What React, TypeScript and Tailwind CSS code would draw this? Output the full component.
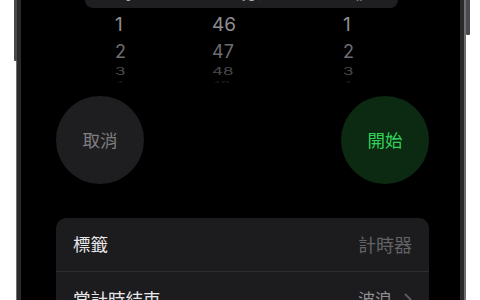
import React from "react";

const cjk = { fontFamily: '"Noto Sans CJK TC", "Noto Sans", sans-serif' };
const num = { fontFamily: 'Inter, "Noto Sans CJK TC", sans-serif' };

function Row({
  a,
  b,
  c,
  cls,
}: {
  a: string;
  b: string;
  c: string;
  cls: string;
}) {
  return (
    <div className={`flex w-[316px] ml-[29px] ${cls}`} style={num}>
      <div className="w-[70px] pl-[30px]">{a}</div>
      <div className="w-[140px] pl-[57px]">{b}</div>
      <div className="w-[106px] pl-[48px]">{c}</div>
    </div>
  );
}

export default function App() {
  return (
    <div className="relative w-[480px] h-[300px] bg-white overflow-hidden flex">
      <div className="absolute top-0 left-[14px] w-[3px] h-[61px] bg-[#4a4a4e] rounded-b-[1px]" />
      <div className="absolute top-0 left-[466px] w-[4px] h-[35px] bg-[#4a4a4e] rounded-b-[1px]" />
      <div className="ml-[16px] w-[450px] h-full flex bg-[#2a2a2c] border-l border-r-2 border-[#6e6e73] px-[4px]">
        <div className="flex-1 bg-black flex flex-col pl-[35px] pr-[31px]">
          {/* picker */}
          <div className="flex flex-col">
            <div className="ml-[29px] w-[313px] h-[30px] mt-[-22px] rounded-[8px] bg-[#1f1f21] flex items-end pb-[6px] text-[17px] leading-[20px] text-[#a8a8ac]" style={cjk}>
              <div className="w-[70px] pl-[31px]">0 小時</div>
              <div className="w-[140px] pl-[64px]">45 分鐘</div>
              <div className="w-[106px] pl-[47px]">0 秒</div>
            </div>
            <Row a="1" b="46" c="1" cls="h-[34px] items-center text-[19px] leading-[20px] text-[#8e8e92]" />
            <Row a="2" b="47" c="2" cls="h-[20px] items-center text-[18px] leading-[20px] text-[#6e6e72]" />
            <Row a="3" b="48" c="3" cls="h-[18px] items-center text-[17px] leading-[16px] text-[#4a4a4d] scale-y-[0.6]" />
            <Row a="4" b="49" c="4" cls="h-[4px] items-start text-[14px] leading-[10px] text-[#2a2a2c] scale-y-[0.35] overflow-hidden" />
          </div>
          {/* buttons */}
          <div className="mt-[12px] flex justify-between">
            <div className="w-[88px] h-[88px] rounded-full bg-[#1e1e20] flex items-center justify-center text-[17.5px] text-[#7e7e82]" style={cjk}>
              取消
            </div>
            <div className="w-[88px] h-[88px] rounded-full bg-[#0c2912] flex items-center justify-center text-[17.5px] text-[#32d25a]" style={cjk}>
              開始
            </div>
          </div>
          {/* list */}
          <div className="mt-[34px] rounded-[10px] bg-[#1c1c1e] flex flex-col" style={cjk}>
            <div className="h-[54px] flex items-center justify-between px-[17px] border-b border-[#2e2e30]">
              <span className="text-[17.5px] text-[#e8e8ea]">標籤</span>
              <span className="text-[18px] text-[#636366]">計時器</span>
            </div>
            <div className="h-[54px] flex items-center justify-between px-[17px]">
              <span className="text-[17.5px] text-[#e8e8ea]">當計時結束</span>
              <span className="flex items-center gap-[12px] text-[17px] text-[#8e8e92]">
                波浪
                <svg width="8" height="13" viewBox="0 0 8 13" fill="none">
                  <path d="M1.5 1.5L6.5 6.5L1.5 11.5" stroke="#5c5c60" strokeWidth="1.8" strokeLinecap="round" strokeLinejoin="round" />
                </svg>
              </span>
            </div>
          </div>
        </div>
      </div>
    </div>
  );
}
